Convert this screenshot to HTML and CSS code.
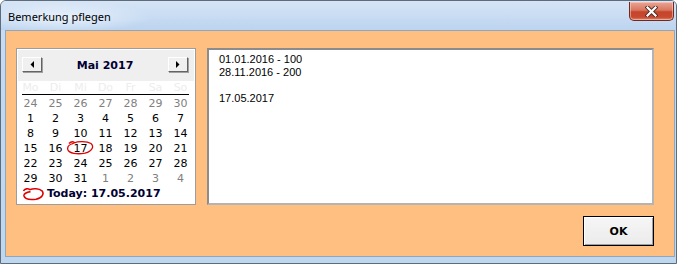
FILE: index.html
```html
<!DOCTYPE html>
<html lang="de">
<head>
    <meta charset="UTF-8">
    <title>Bemerkung pflegen</title>
    <link rel="stylesheet" href="styles.css">
</head>
<body>
    <div class="window">
        <div class="titlebar">
            <span class="title">Bemerkung pflegen</span>
            <div class="close-btn">
                <svg width="13" height="11" viewBox="0 0 13 11">
                    <path d="M2.5 1.5 L10.5 9.5 M10.5 1.5 L2.5 9.5" stroke="#4a2a26" stroke-width="4" stroke-linecap="square"/>
                    <path d="M2.5 1.5 L10.5 9.5 M10.5 1.5 L2.5 9.5" stroke="#fff" stroke-width="2.2" stroke-linecap="square"/>
                </svg>
            </div>
        </div>
        <div class="client">
            <div class="content">
                <div class="calendar">
                    <div class="cal-header">
                        <div class="nav-btn">
                            <svg width="4" height="7" viewBox="0 0 4 7"><polygon points="4,0 4,7 0.5,3.5" fill="#000"/></svg>
                        </div>
                        <div class="month">Mai 2017</div>
                        <div class="nav-btn">
                            <svg width="4" height="7" viewBox="0 0 4 7"><polygon points="0,0 0,7 3.5,3.5" fill="#000"/></svg>
                        </div>
                    </div>
                    <div class="weekdays">
                        <span>Mo</span><span>Di</span><span>Mi</span><span>Do</span><span>Fr</span><span>Sa</span><span>So</span>
                    </div>
                    <div class="rule"></div>
                    <div class="days">
                        <span class="other">24</span><span class="other">25</span><span class="other">26</span><span class="other">27</span><span class="other">28</span><span class="other">29</span><span class="other">30</span>
                        <span>1</span><span>2</span><span>3</span><span>4</span><span>5</span><span>6</span><span>7</span>
                        <span>8</span><span>9</span><span>10</span><span>11</span><span>12</span><span>13</span><span>14</span>
                        <span>15</span><span>16</span>
                        <span class="selected">17
                            <svg class="mark" width="28" height="15" viewBox="0 0 28 15">
                                <path d="M3 3.5 C5 1, 9 1.5, 8 3 C12 1.2, 21 1.2, 25 3.5 C28 6, 27 11, 19 13.2 C11 14.5, 3 13.5, 1.8 9.5 C1 6.5, 4 4.2, 8 3" fill="none" stroke="#e00000" stroke-width="1.3"/>
                            </svg>
                        </span>
                        <span>18</span><span>19</span><span>20</span><span>21</span>
                        <span>22</span><span>23</span><span>24</span><span>25</span><span>26</span><span>27</span><span>28</span>
                        <span>29</span><span>30</span><span>31</span><span class="other">1</span><span class="other">2</span><span class="other">3</span><span class="other">4</span>
                    </div>
                    <div class="today">
                        <svg class="today-mark" width="22" height="14" viewBox="0 0 22 14">
                            <path d="M1.5 4 C2.5 1.5, 6 1.2, 8 2.6 C11 1.2, 17 1.3, 20 3.8 C22.3 6.5, 20.5 11, 14 12.2 C8 13, 3 12.2, 2 9 C1.5 6.8, 4.5 5.2, 8.5 4.6" fill="none" stroke="#e00000" stroke-width="1.6"/>
                        </svg>
                        <span>Today: 17.05.2017</span>
                    </div>
                </div>
                <div class="notes">
                    <p>01.01.2016 - 100</p>
                    <p>28.11.2016 - 200</p>
                    <p>&nbsp;</p>
                    <p>17.05.2017</p>
                </div>
            </div>
            <div class="actions">
                <button class="ok-btn">OK</button>
            </div>
        </div>
    </div>
</body>
</html>
```

FILE: styles.css
```css
* {
    margin: 0;
    padding: 0;
    box-sizing: border-box;
}
body {
    width: 677px;
    height: 264px;
    overflow: hidden;
    background: #fff;
}
.window {
    display: flex;
    flex-direction: column;
    width: 677px;
    height: 264px;
    border: 1px solid #5d6b7a;
    border-radius: 6px 6px 0 0;
    background: linear-gradient(to bottom, #c9dcf2, #c2d8f1 40%, #bfd6ef);
}
.titlebar {
    display: flex;
    justify-content: space-between;
    align-items: flex-start;
    height: 29px;
    background:
        radial-gradient(ellipse 90px 16px at 60px 16px, rgba(235, 243, 252, 0.9), rgba(235, 243, 252, 0) 100%),
        linear-gradient(to bottom, #d6e5f6, #bcd4ef);
    border-radius: 5px 5px 0 0;
}
.title {
    font-family: "Noto Sans", sans-serif;
    font-size: 11px;
    color: #000;
    padding: 8px 0 0 7px;
}
.close-btn {
    display: flex;
    justify-content: center;
    align-items: center;
    width: 45px;
    height: 19px;
    margin: 1px 2px 0 0;
    border: 1px solid #6c2a22;
    border-top: none;
    border-radius: 0 0 5px 5px;
    background: linear-gradient(to bottom, #e9a597, #d9775f 45%, #c4452b 55%, #c94a30 85%, #e08a6e);
    box-shadow: inset 0 0 0 1px rgba(255, 220, 210, 0.5);
}
.client {
    display: flex;
    flex-direction: column;
    flex: 1;
    margin: 0 1px 6px 4px;
    padding: 17px 20px 10px 10px;
    background: #ffbf80;
    border: 1px solid #8fa6c0;
}
.content {
    display: flex;
    gap: 11px;
    width: 638px;
    height: 157px;
}
.calendar {
    flex: none;
    width: 180px;
    height: 157px;
    background: #fff;
    border: 1px solid #9d9d9d;
    padding: 1px;
    font-family: "DejaVu Sans", sans-serif;
    font-size: 11px;
}
.cal-header {
    display: flex;
    align-items: center;
    height: 31px;
    padding: 0 6px 2px 4px;
    background: #efefef;
}
.nav-btn {
    display: flex;
    justify-content: center;
    align-items: center;
    width: 20px;
    height: 15px;
    background: #f0f0f0;
    border: 1px solid;
    border-color: #fff #646464 #646464 #fff;
    box-shadow: 1px 1px 0 #a0a0a0;
}
.month {
    flex: 1;
    text-align: center;
    font-weight: bold;
    color: #000033;
    padding-top: 2px;
}
.weekdays,
.days {
    display: grid;
    grid-template-columns: repeat(7, 25px);
    text-align: center;
}
.weekdays {
    height: 13px;
    line-height: 13px;
    color: #ededed;
}
.rule {
    height: 1px;
    margin: 0 5px 0 4px;
    background: #000;
}
.days {
    grid-auto-rows: 15px;
    line-height: 15px;
    padding-top: 1px;
    color: #000;
}
.days .other {
    color: #808080;
}
.selected {
    position: relative;
}
.mark {
    position: absolute;
    left: -2px;
    top: -1px;
}
.today {
    display: flex;
    align-items: center;
    gap: 3px;
    height: 15px;
    padding-left: 4px;
    font-weight: bold;
    color: #000033;
}
.today-mark {
    flex: none;
}
.notes {
    flex: none;
    width: 447px;
    height: 157px;
    background: #fff;
    border: 2px solid;
    border-color: #8c8c8c #b4b4b4 #b4b4b4 #8c8c8c;
    padding: 3px 10px;
    font-family: "Liberation Sans", Arial, sans-serif;
    font-size: 11px;
    line-height: 13px;
    color: #000;
}
.actions {
    display: flex;
    justify-content: flex-end;
    margin-top: 11px;
}
.ok-btn {
    width: 71px;
    height: 30px;
    border: 1px solid #000;
    background: linear-gradient(to bottom, #f6f6f6, #ebebeb);
    box-shadow: inset 1px 1px 0 #fff, inset -1px -1px 0 #a0a0a0;
    font-family: "DejaVu Sans", sans-serif;
    font-size: 11px;
    font-weight: bold;
    color: #000;
}
```
